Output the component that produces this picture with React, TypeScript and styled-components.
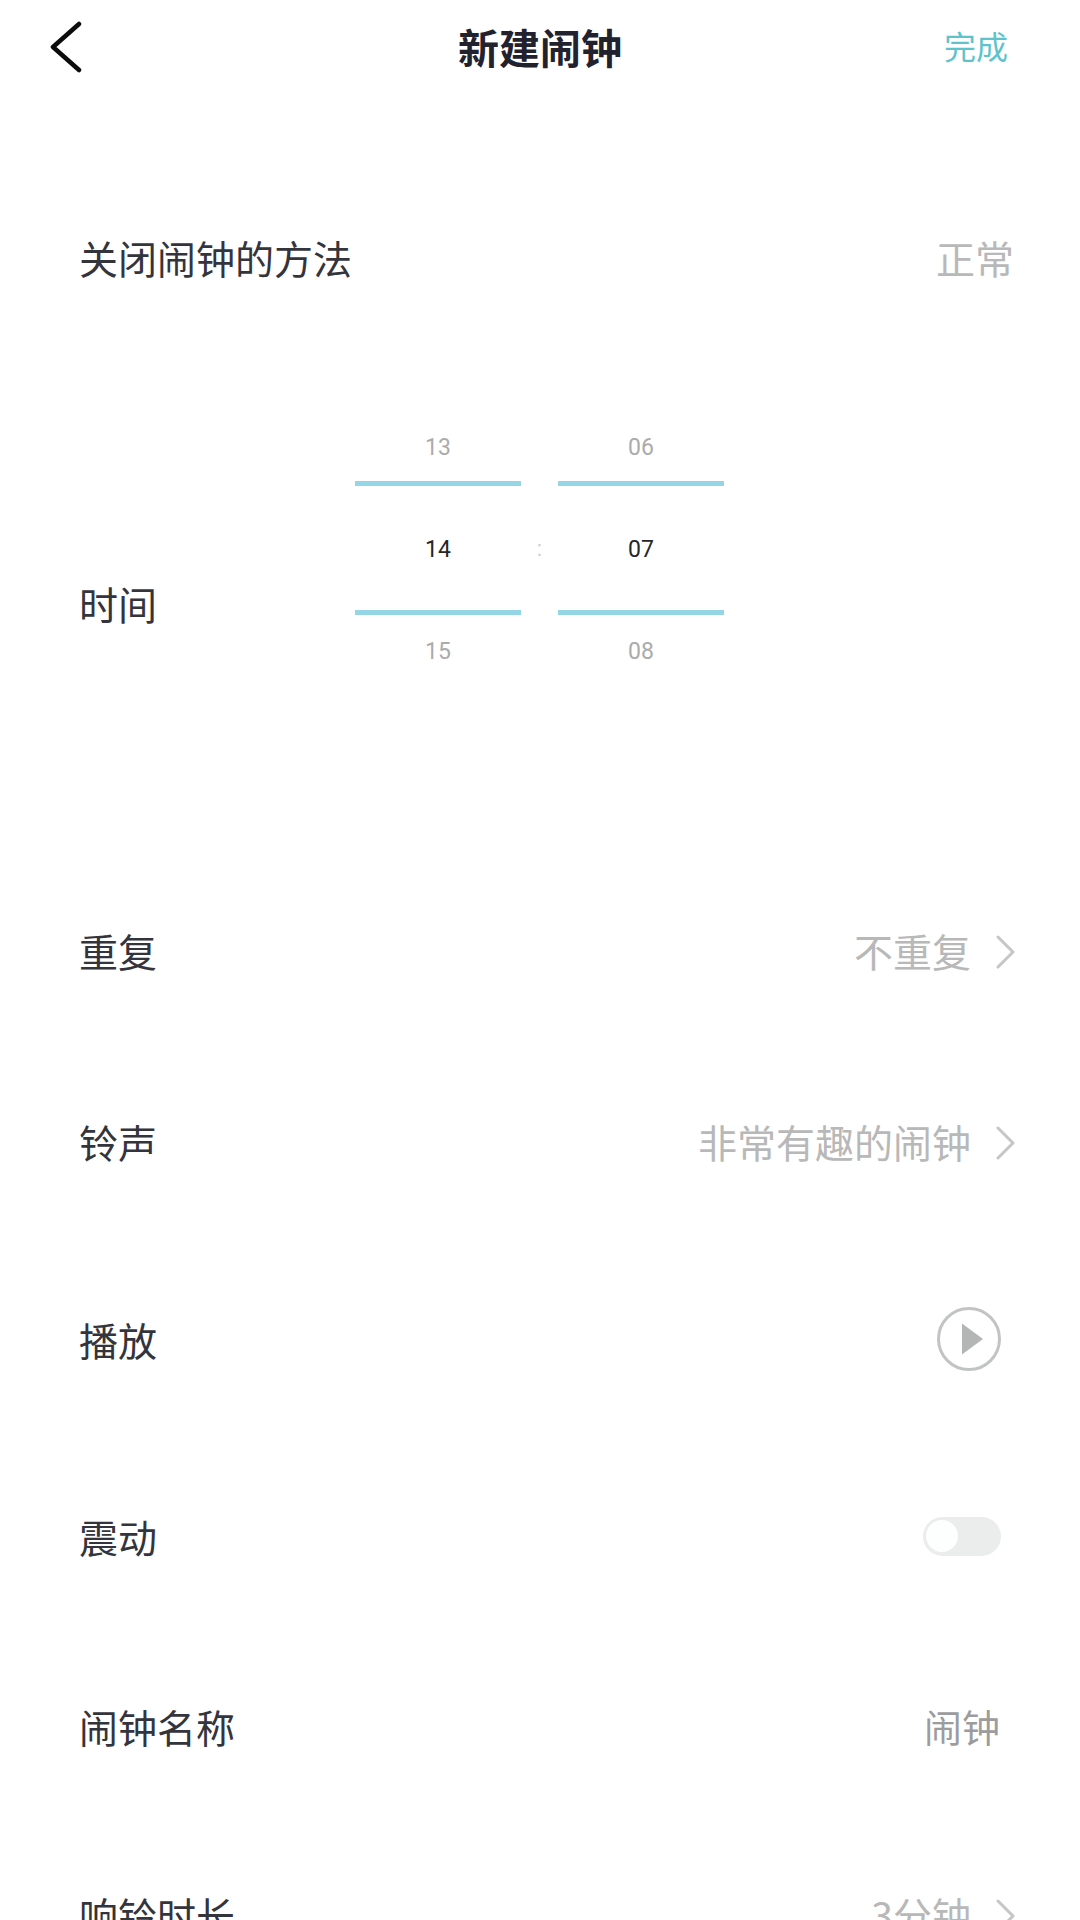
import React from "react";
import styled, { createGlobalStyle } from "styled-components";

const Global = createGlobalStyle`
  html, body { margin: 0; padding: 0; background: #fff; }
  body { font-family: "Noto Sans CJK SC", "Noto Sans", sans-serif; }
`;

const Page = styled.div`
  width: 1080px;
  height: 1920px;
  overflow: hidden;
  background: #fff;
  display: flex;
  flex-direction: column;
`;

const Header = styled.header`
  height: 94px;
  flex: none;
  display: grid;
  grid-template-columns: 1fr auto 1fr;
  align-items: center;
  margin-bottom: 69px;
`;

const BackButton = styled.div`
  display: flex;
  padding-left: 49px;
`;

const Title = styled.h1`
  margin: 0 0 3px;
  font-size: 41px;
  line-height: 60px;
  font-weight: 700;
  color: #22222e;
`;

const Done = styled.div`
  justify-self: end;
  margin-bottom: 4px;
  padding-right: 72px;
  font-size: 32px;
  line-height: 60px;
  color: #5fc3cc;
`;

const Row = styled.div<{ $h: number }>`
  height: ${(p) => p.$h}px;
  flex: none;
  display: flex;
  align-items: center;
  justify-content: space-between;
  padding: 0 64px 0 79px;
`;

const TimeRow = styled.div`
  height: 504px;
  flex: none;
  display: flex;
  align-items: center;
  padding-left: 79px;
`;

const Label = styled.div`
  font-size: 39px;
  line-height: 56px;
  color: #34343c;
`;

const TimeLabel = styled(Label)`
  width: 276px;
`;

const Value = styled.div<{ $dark?: boolean; $inset?: number }>`
  font-size: ${(p) => (p.$dark ? 38 : 39)}px;
  line-height: 56px;
  color: ${(p) => (p.$dark ? "#9c9c9c" : "#b8b8b8")};
  margin-right: ${(p) => p.$inset ?? 0}px;
`;

const Trailing = styled.div`
  display: flex;
  align-items: center;
  gap: 25px;
`;

const ChevronIcon = styled.svg`
  display: block;
  margin-top: 3px;
`;

const Picker = styled.div`
  display: flex;
  align-self: flex-start;
  margin-top: 60px;
`;

const Wheel = styled.div`
  width: 166px;
  display: flex;
  flex-direction: column;
`;

const Cell = styled.div`
  height: 70px;
  padding-top: 2px;
  box-sizing: border-box;
  display: flex;
  align-items: center;
  justify-content: center;
  font-family: Roboto, sans-serif;
  font-size: 23px;
  color: #ababab;
`;

const Current = styled.div`
  height: 122px;
  padding-top: 2px;
  border-top: 5px solid #94d5e6;
  border-bottom: 5px solid #94d5e6;
  display: flex;
  align-items: center;
  justify-content: center;
  font-family: Roboto, sans-serif;
  font-size: 23px;
  color: #26262a;
`;

const Colon = styled.div`
  width: 37px;
  height: 274px;
  display: flex;
  align-items: center;
  justify-content: center;
  font-family: Roboto, sans-serif;
  font-size: 22px;
  color: #cfcfcf;
`;

const PlayIcon = styled.svg`
  display: block;
  margin-right: 14px;
`;

const Toggle = styled.div`
  width: 78px;
  height: 39px;
  margin-right: 15px;
  border-radius: 20px;
  background: #ebedec;
  display: flex;
  align-items: center;
  padding-left: 3px;
  box-sizing: border-box;
`;

const Knob = styled.div`
  width: 32px;
  height: 32px;
  border-radius: 50%;
  background: #fdfefe;
`;

const Chevron = () => (
  <ChevronIcon width="20" height="34" viewBox="0 0 20 34" fill="none">
    <polyline
      points="2,2 17,17 2,32"
      stroke="#c6c6c6"
      strokeWidth="3"
      strokeLinecap="round"
      strokeLinejoin="round"
    />
  </ChevronIcon>
);

const wheels = [
  ["13", "14", "15"],
  ["06", "07", "08"],
];

export default function App() {
  return (
    <Page>
      <Global />
      <Header>
        <BackButton>
          <svg width="34" height="52" viewBox="0 0 34 52" fill="none">
            <polyline
              points="30,3 4,26 30,49"
              stroke="#0c0c0c"
              strokeWidth="4.5"
              strokeLinecap="round"
              strokeLinejoin="round"
            />
          </svg>
        </BackButton>
        <Title>新建闹钟</Title>
        <Done>完成</Done>
      </Header>

      <Row $h={188}>
        <Label>关闭闹钟的方法</Label>
        <Value $inset={2}>正常</Value>
      </Row>

      <TimeRow>
        <TimeLabel>时间</TimeLabel>
        <Picker>
          <Wheel>
            <Cell>{wheels[0][0]}</Cell>
            <Current>{wheels[0][1]}</Current>
            <Cell>{wheels[0][2]}</Cell>
          </Wheel>
          <Colon>:</Colon>
          <Wheel>
            <Cell>{wheels[1][0]}</Cell>
            <Current>{wheels[1][1]}</Current>
            <Cell>{wheels[1][2]}</Cell>
          </Wheel>
        </Picker>
      </TimeRow>

      <Row $h={190}>
        <Label>重复</Label>
        <Trailing>
          <Value>不重复</Value>
          <Chevron />
        </Trailing>
      </Row>
      <Row $h={192}>
        <Label>铃声</Label>
        <Trailing>
          <Value>非常有趣的闹钟</Value>
          <Chevron />
        </Trailing>
      </Row>
      <Row $h={204}>
        <Label>播放</Label>
        <PlayIcon width="66" height="66" viewBox="0 0 66 66" fill="none">
          <circle cx="33" cy="33" r="30.5" stroke="#c2c4c4" strokeWidth="3" />
          <path d="M26 17.5 L47 33 L26 48.5 Z" fill="#b4b6b6" strokeLinejoin="round" />
        </PlayIcon>
      </Row>
      <Row $h={190}>
        <Label>震动</Label>
        <Toggle>
          <Knob />
        </Toggle>
      </Row>
      <Row $h={190}>
        <Label>闹钟名称</Label>
        <Value $dark $inset={16}>闹钟</Value>
      </Row>
      <Row $h={186}>
        <Label>响铃时长</Label>
        <Trailing>
          <Value>3分钟</Value>
          <Chevron />
        </Trailing>
      </Row>
    </Page>
  );
}
